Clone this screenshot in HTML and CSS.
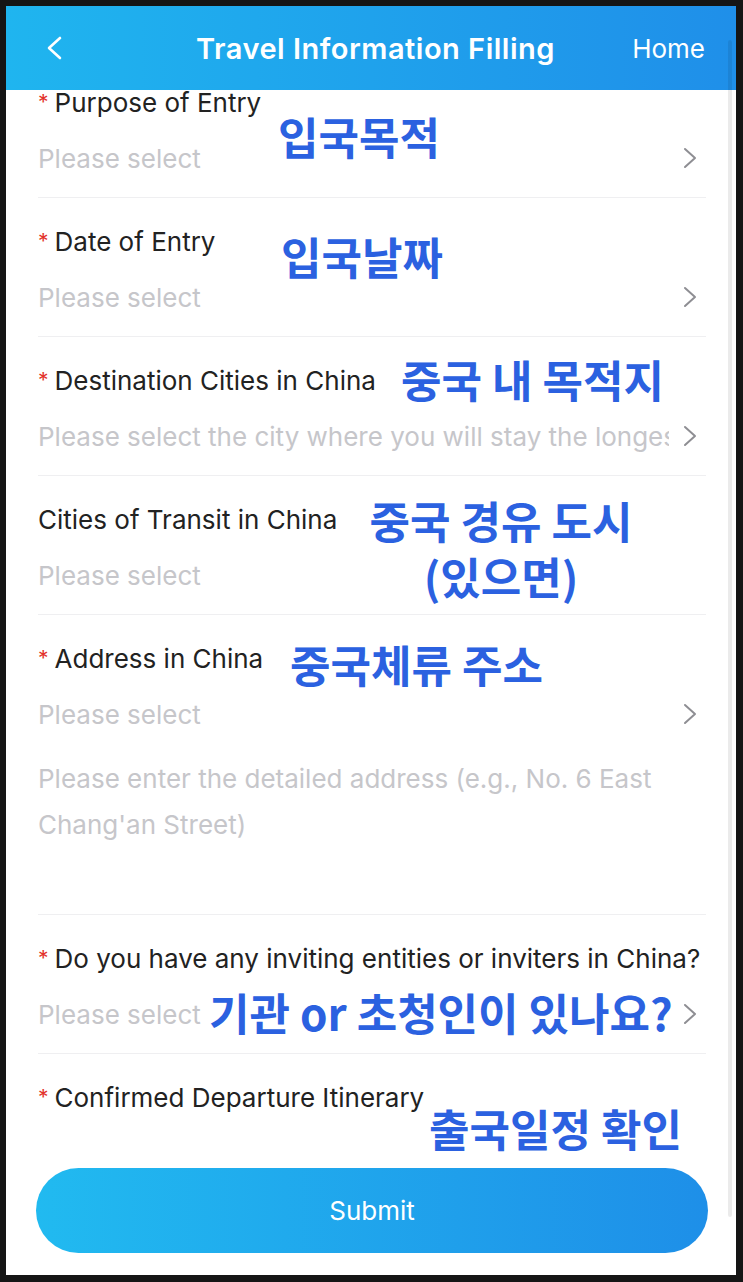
FILE: index.html
```html
<!DOCTYPE html>
<html lang="en">
<head>
  <meta charset="UTF-8">
  <title>Travel Information Filling</title>
  <meta name="viewport" content="width=device-width, initial-scale=1">
  <link rel="stylesheet" href="styles.css">
</head>
<body>

  <div class="screen">
    <header class="topbar">
      <div class="back">
        <svg width="16" height="24" viewBox="0 0 16 24"><polyline points="14,2 3,12 14,22" fill="none" stroke="#fff" stroke-width="2.6" stroke-linecap="round" stroke-linejoin="round"/></svg>
      </div>
      <h1>Travel Information Filling</h1>
      <div class="home">Home</div>
    </header>

    <main class="content">
      <div class="list">
        <div class="row">
          <div class="label"><span class="req">*</span>Purpose of Entry</div>
          <div class="select">
            <span class="placeholder">Please select</span>
            <svg class="chev" width="14" height="24" viewBox="0 0 14 24"><polyline points="2,3 12,12 2,21" fill="none" stroke="#8e8e93" stroke-width="2" stroke-linecap="round" stroke-linejoin="round"/></svg>
          </div>
          <div class="note note-1">입국목적</div>
        </div>

        <div class="row">
          <div class="label"><span class="req">*</span>Date of Entry</div>
          <div class="select">
            <span class="placeholder">Please select</span>
            <svg class="chev" width="14" height="24" viewBox="0 0 14 24"><polyline points="2,3 12,12 2,21" fill="none" stroke="#8e8e93" stroke-width="2" stroke-linecap="round" stroke-linejoin="round"/></svg>
          </div>
          <div class="note note-2">입국날짜</div>
        </div>

        <div class="row">
          <div class="label"><span class="req">*</span>Destination Cities in China</div>
          <div class="select">
            <span class="placeholder">Please select the city where you will stay the longest</span>
            <svg class="chev" width="14" height="24" viewBox="0 0 14 24"><polyline points="2,3 12,12 2,21" fill="none" stroke="#8e8e93" stroke-width="2" stroke-linecap="round" stroke-linejoin="round"/></svg>
          </div>
          <div class="note note-3">중국 내 목적지</div>
        </div>

        <div class="row">
          <div class="label">Cities of Transit in China</div>
          <div class="select">
            <span class="placeholder">Please select</span>
          </div>
          <div class="note note-4">중국 경유 도시<br>(있으면)</div>
        </div>

        <div class="row row-address">
          <div class="label"><span class="req">*</span>Address in China</div>
          <div class="select">
            <span class="placeholder">Please select</span>
            <svg class="chev" width="14" height="24" viewBox="0 0 14 24"><polyline points="2,3 12,12 2,21" fill="none" stroke="#8e8e93" stroke-width="2" stroke-linecap="round" stroke-linejoin="round"/></svg>
          </div>
          <div class="detail">Please enter the detailed address (e.g., No. 6 East<br>Chang'an Street)</div>
          <div class="note note-5">중국체류 주소</div>
        </div>

        <div class="row">
          <div class="label"><span class="req">*</span>Do you have any inviting entities or inviters in China?</div>
          <div class="select">
            <span class="placeholder">Please select</span>
            <svg class="chev" width="14" height="24" viewBox="0 0 14 24"><polyline points="2,3 12,12 2,21" fill="none" stroke="#8e8e93" stroke-width="2" stroke-linecap="round" stroke-linejoin="round"/></svg>
          </div>
          <div class="note note-6">기관 or 초청인이 있나요?</div>
        </div>

        <div class="row row-last">
          <div class="label"><span class="req">*</span>Confirmed Departure Itinerary</div>
          <div class="note note-7">출국일정 확인</div>
        </div>
      </div>
    </main>

    <footer class="bottom">
      <button type="button">Submit</button>
    </footer>

    <div class="scrollbar"></div>
  </div>

</body>
</html>
```

FILE: styles.css
```css
* {
  margin: 0;
  padding: 0;
  box-sizing: border-box;
}

body {
  background: #151515;
  font-family: Inter, "Liberation Sans", sans-serif;
  padding: 6px 7px 7px 6px;
}

.screen {
  position: relative;
  width: 730px;
  height: 1269px;
  background: #fff;
  display: flex;
  flex-direction: column;
  overflow: hidden;
}

.topbar {
  height: 84px;
  flex-shrink: 0;
  background: linear-gradient(to right, #1fb5ef, #1f8fe9);
  display: grid;
  grid-template-columns: 1fr auto 1fr;
  align-items: center;
  padding: 0 31px 0 40px;
  color: #fff;
  position: relative;
  z-index: 2;
}

.back {
  display: flex;
  align-items: center;
}

.topbar h1 {
  font-size: 29px;
  font-weight: 600;
  letter-spacing: 0.5px;
}

.home {
  justify-self: end;
  font-size: 26px;
}

.content {
  flex: 1;
  overflow: hidden;
}

.list {
  margin-top: -31px;
}

.row {
  position: relative;
  margin: 0 30px 0 32px;
  height: 139px;
  padding-top: 29px;
  border-bottom: 1px solid #efeff1;
}

.row-address {
  height: 300px;
}

.row-last {
  height: 90px;
  border-bottom: none;
}

.label {
  font-size: 26px;
  line-height: 30px;
  color: #222;
  white-space: nowrap;
}

.req {
  color: #e3322b;
  font-size: 21px;
  margin-right: 6px;
  vertical-align: 2px;
}

.select {
  display: flex;
  align-items: center;
  gap: 14px;
  margin-top: 25px;
  margin-right: 9px;
  height: 30px;
}

.placeholder {
  flex: 1;
  min-width: 0;
  overflow: hidden;
  white-space: nowrap;
  font-size: 26px;
  color: #c6c6ca;
}

.chev {
  flex-shrink: 0;
}

.detail {
  margin-top: 27px;
  font-size: 26px;
  line-height: 46px;
  color: #c6c6ca;
}

.note {
  position: absolute;
  font-family: "Noto Sans CJK KR", sans-serif;
  font-weight: 700;
  font-size: 44px;
  line-height: 44px;
  color: #2b61e0;
  white-space: nowrap;
}

.note-1 { top: 55px; left: 240px; }
.note-2 { top: 36px; left: 243px; }
.note-3 { top: 20px; left: 363px; }
.note-4 { top: 16px; left: 303px; width: 320px; text-align: center; line-height: 56px; }
.note-5 { top: 27px; left: 252px; }
.note-6 { top: 75px; left: 171px; }
.note-7 { top: 52px; left: 391px; }

.bottom {
  height: 123px;
  flex-shrink: 0;
  background: #fff;
  padding: 16px 28px 0 30px;
}

.bottom button {
  width: 100%;
  height: 85px;
  border: none;
  border-radius: 43px;
  background: linear-gradient(to right, #21baf0, #1e8fe8);
  color: #fff;
  font-family: Inter, "Liberation Sans", sans-serif;
  font-size: 26px;
}

.scrollbar {
  position: absolute;
  top: 34px;
  left: 722px;
  width: 4px;
  height: 1177px;
  border-radius: 2px;
  background: rgba(0, 0, 0, 0.08);
  z-index: 3;
}
```
